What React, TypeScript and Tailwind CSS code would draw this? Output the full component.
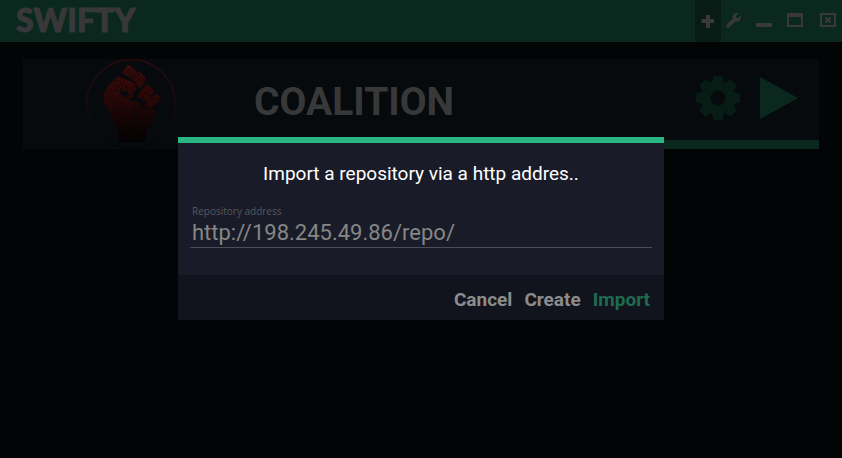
import { useState } from 'react'
import { FaWrench } from 'react-icons/fa'

// ---- Window controls ----
function PlusIcon() {
  return (
    <svg viewBox="0 0 14 14" className="w-[14px] h-[14px]" fill="currentColor">
      <path d="M5 1.5a.5.5 0 0 1 .5-.5h3a.5.5 0 0 1 .5.5V5h3.500a.5.5 0 0 1 .5.5v3a.5.5 0 0 1-.5.5H9v4.500a.5.5 0 0 1-.5.5h-3a.5.5 0 0 1-.5-.5V9H1a.5.5 0 0 1-.5-.5v-3A.5.5 0 0 1 1 5h4z" />
    </svg>
  )
}

function MinimizeIcon() {
  return (
    <svg viewBox="0 0 16 14" className="w-4 h-[14px]" fill="currentColor">
      <rect x="0" y="10" width="16" height="4" rx="1" />
    </svg>
  )
}

function MaximizeIcon() {
  return (
    <svg viewBox="0 0 16 14" className="w-4 h-[14px]" fill="currentColor" fillRule="evenodd">
      <path d="M1 0h14a1 1 0 0 1 1 1v12a1 1 0 0 1-1 1H1a1 1 0 0 1-1-1V1a1 1 0 0 1 1-1zM2 4v8h12V4z" />
    </svg>
  )
}

function CloseIcon() {
  return (
    <svg viewBox="0 0 16 14" className="w-4 h-[14px]" fill="none" stroke="currentColor">
      <rect x="1" y="1" width="14" height="12" strokeWidth="2" />
      <path d="M5.500 4.500l5 5M10.500 4.500l-5 5" strokeWidth="2.400" />
    </svg>
  )
}

function TitleBar({ onAdd }: { onAdd: () => void }) {
  return (
    <header className="flex items-stretch justify-between h-[42px] bg-[#0a281e] text-[#393939]">
      <h1 className="pl-4 text-[32px] leading-[40px] font-black font-['Lato',sans-serif] text-[#38383a] [-webkit-text-stroke:1px_#38383a]">
        SWIFTY
      </h1>
      <div className="flex items-stretch pr-[6px]">
        <button aria-label="Add" onClick={onAdd} className="flex justify-center w-[26px] pt-[14px] bg-[#081c15]">
          <PlusIcon />
        </button>
        <button aria-label="Settings" className="flex justify-center w-6 pt-[13px]">
          <FaWrench className="w-[15px] h-[15px]" />
        </button>
        <nav className="flex items-stretch pl-[6px]">
          <button aria-label="Minimize" className="flex justify-center w-[26px] pt-[13px]"><MinimizeIcon /></button>
          <button aria-label="Maximize" className="flex justify-center w-9 pt-[13px]"><MaximizeIcon /></button>
          <button aria-label="Close" className="flex justify-end w-[23px] pt-[13px]"><CloseIcon /></button>
        </nav>
      </div>
    </header>
  )
}

// ---- Repository logo ----
function FistLogo() {
  return (
    <svg viewBox="6 6 270 270" className="w-[90px] h-[90px]" role="img" aria-label="Coalition logo">
      <defs>
        <linearGradient id="fist" gradientUnits="userSpaceOnUse" x1="0" y1="20" x2="0" y2="254">
          <stop offset="0" stopColor="#3a0b0c" />
          <stop offset="0.45" stopColor="#2b0808" />
          <stop offset="0.75" stopColor="#120405" />
          <stop offset="1" stopColor="#020202" />
        </linearGradient>
        <linearGradient id="ring" gradientUnits="userSpaceOnUse" x1="0" y1="6" x2="0" y2="276">
          <stop offset="0" stopColor="#2c0b0c" />
          <stop offset="0.6" stopColor="#17090b" />
          <stop offset="1" stopColor="#030405" />
        </linearGradient>
        <filter id="grain" x="0" y="0" width="1" height="1" colorInterpolationFilters="sRGB">
          <feTurbulence type="fractalNoise" baseFrequency="0.35" numOctaves="2" seed="4" />
          <feColorMatrix values="0 0 0 0 0.06  0 0 0 0 0.01  0 0 0 0 0.01  0 0 0 5 -2.700" />
          <feComposite in2="SourceGraphic" operator="in" result="spots" />
          <feMerge>
            <feMergeNode in="SourceGraphic" />
            <feMergeNode in="spots" />
          </feMerge>
        </filter>
      </defs>
      <circle cx="141" cy="141" r="133" fill="none" stroke="url(#ring)" strokeWidth="4" />
      <g fill="url(#fist)" stroke="url(#fist)" strokeWidth="4" strokeLinejoin="round" filter="url(#grain)">
        {/* fingers */}
        <path d="M133 24L156 45L142 62L115 47z" />
        <path d="M163 44L182 61L179 80L168 90L160 88L157 77L147 68z" />
        <path d="M189 83L209 100L191 133L162 119L164 112L180 94z" />
        <path d="M215 111L229 124L204 153L182 147z" />
        {/* hand and wrist */}
        <path d="M102 60L146 77L154 90L151 102L136 107L125 100L110 99L104 112L124 121L135 129L145 160L154 190L151 200L160 208L167 200L162 188L143 134L158 135L177 155L191 160L213 160L204 195L187 220L180 253H107L103 215L62 138L60 112L72 90z" />
        <path d="M131 113L144 109L148 114L142 122L132 122z" />
      </g>
    </svg>
  )
}

const TEETH = [0, 45, 90, 135, 180, 225, 270, 315]

function GearIcon() {
  return (
    <svg viewBox="-22 -22 44 44" className="w-11 h-11" fill="currentColor">
      <path fillRule="evenodd" d="M0-17a17 17 0 1 0 0 34a17 17 0 1 0 0-34zM0-7.500a7.500 7.500 0 1 1 0 15a7.500 7.500 0 1 1 0-15z" />
      {TEETH.map(angle => (
        <path key={angle} d="M-4.500-22h9l1.500 7h-12z" transform={`rotate(${angle})`} />
      ))}
    </svg>
  )
}

function RepositoryCard() {
  return (
    <section className="flex flex-col h-[90px] bg-[#060a0d]">
      <div className="flex h-[81px] pl-[63px] pr-5">
        <div className="shrink-0 w-[90px] h-[90px]">
          <FistLogo />
        </div>
        <h2 className="grow pl-[78px] pt-[19px] text-[39px] leading-[48px] font-bold text-[#383838]">COALITION</h2>
        <div className="flex gap-5 pt-[17px]">
          <button aria-label="Repository settings" className="h-11 text-[#071c14]">
            <GearIcon />
          </button>
          <button aria-label="Play" className="h-11 text-[#0a281e]">
            <svg viewBox="0 0 39 44" className="w-[39px] h-11" fill="currentColor">
              <path d="M0 1l38 21L0 43z" />
            </svg>
          </button>
        </div>
      </div>
      <div className="self-end w-[70%] h-[9px] bg-[#0a281e]" />
    </section>
  )
}

// ---- Import dialog ----
function ImportDialog({ onClose }: { onClose: () => void }) {
  const [address, setAddress] = useState('http://198.245.49.86/repo/')

  return (
    <div className="fixed inset-0 flex items-center justify-center pb-px">
      <form
        role="dialog"
        aria-labelledby="import-title"
        onSubmit={e => e.preventDefault()}
        className="w-[486px] max-w-full border-t-[6px] border-[#2ab584] bg-[#191c28]"
      >
        <div className="h-[132px] px-3 pt-[19px]">
          <h3 id="import-title" className="text-center text-[19px] leading-6 text-white">
            Import a repository via a http addres..
          </h3>
          <label htmlFor="address" className="block pt-[18px] pl-[2px] text-[10px] leading-[14px] text-[#55575d] font-['Open_Sans',sans-serif]">
            Repository address
          </label>
          <input
            id="address"
            value={address}
            onChange={e => setAddress(e.target.value)}
            className="block w-full h-[30px] pl-[2px] border-b border-[#4c4e55] bg-transparent text-[22px] text-[#868686] outline-none"
          />
        </div>
        <div className="flex justify-end gap-3 h-[45px] pr-[14px] pt-[6px] bg-[#12141d] text-[19px] font-bold text-[#8c8c8c]">
          <button type="button" onClick={onClose}>Cancel</button>
          <button type="button">Create</button>
          <button type="submit" className="text-[#1e6b50]">Import</button>
        </div>
      </form>
    </div>
  )
}

export default function App() {
  const [importing, setImporting] = useState(true)

  return (
    <div className="min-h-screen bg-[#030406] font-['Roboto',sans-serif]">
      <TitleBar onAdd={() => setImporting(true)} />
      <main className="px-[23px] pt-[17px]">
        <RepositoryCard />
      </main>
      {importing && <ImportDialog onClose={() => setImporting(false)} />}
    </div>
  )
}
